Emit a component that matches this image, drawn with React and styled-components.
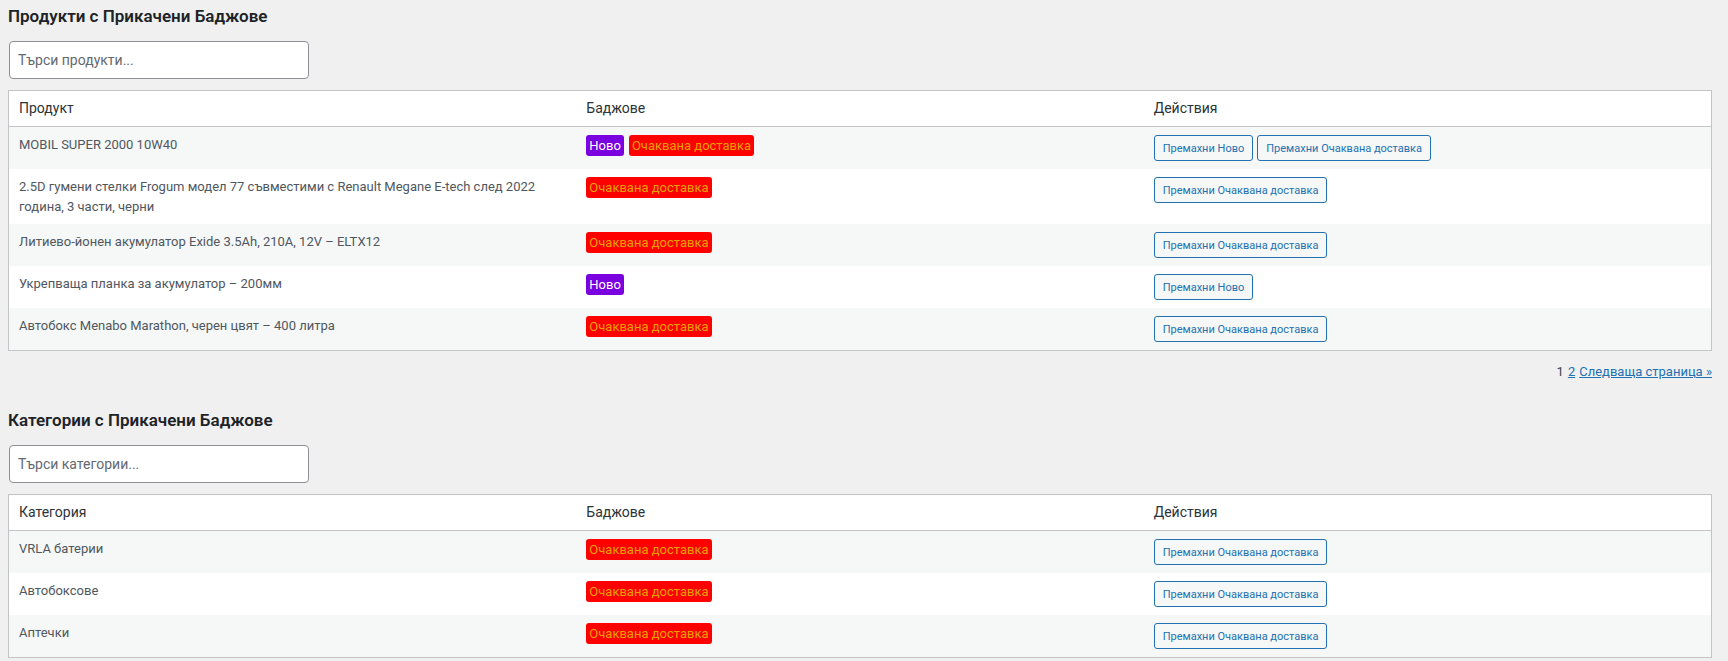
import React from "react";
import styled, { createGlobalStyle } from "styled-components";

const GlobalStyle = createGlobalStyle`
  html, body {
    margin: 0;
    padding: 0;
    background: #f0f0f1;
    font-family: Roboto, "Noto Sans", sans-serif;
    color: #3c434a;
    font-size: 13px;
  }
`;

const products = [
  { name: "MOBIL SUPER 2000 10W40", badges: ["new", "delivery"] },
  {
    name: "2.5D гумени стелки Frogum модел 77 съвместими с Renault Megane E-tech след 2022 година, 3 части, черни",
    badges: ["delivery"],
  },
  { name: "Литиево-йонен акумулатор Exide 3.5Ah, 210A, 12V – ELTX12", badges: ["delivery"] },
  { name: "Укрепваща планка за акумулатор – 200мм", badges: ["new"] },
  { name: "Автобокс Menabo Marathon, черен цвят – 400 литра", badges: ["delivery"] },
];

const categories = [
  { name: "VRLA батерии", badges: ["delivery"] },
  { name: "Автобоксове", badges: ["delivery"] },
  { name: "Аптечки", badges: ["delivery"] },
];

const badgeLabels = {
  new: "Ново",
  delivery: "Очаквана доставка",
};

function BadgeTable({ firstCol, rows }) {
  return (
    <Table>
      <thead>
        <tr>
          <Th>{firstCol}</Th>
          <Th>Баджове</Th>
          <Th>Действия</Th>
        </tr>
      </thead>
      <tbody>
        {rows.map((row, i) => (
          <Row key={i} $striped={i % 2 === 0}>
            <Td>{row.name}</Td>
            <Td>
              <Badges>
                {row.badges.map((b) => (
                  <Badge key={b} $kind={b}>
                    {badgeLabels[b]}
                  </Badge>
                ))}
              </Badges>
            </Td>
            <Td>
              <Actions>
                {row.badges.map((b) => (
                  <SmallButton key={b}>Премахни {badgeLabels[b]}</SmallButton>
                ))}
              </Actions>
            </Td>
          </Row>
        ))}
      </tbody>
    </Table>
  );
}

export default function App() {
  return (
    <>
      <GlobalStyle />
      <Wrap>
        <Section>
          <Title>Продукти с Прикачени Баджове</Title>
          <Search placeholder="Търси продукти..." />
          <BadgeTable firstCol="Продукт" rows={products} />
          <Pagination>
            <span>1</span>
            <PageLink href="#">2</PageLink>
            <PageLink href="#">Следваща страница »</PageLink>
          </Pagination>
        </Section>
        <Section>
          <Title>Категории с Прикачени Баджове</Title>
          <Search placeholder="Търси категории..." />
          <BadgeTable firstCol="Категория" rows={categories} />
        </Section>
      </Wrap>
    </>
  );
}

const Wrap = styled.div`
  padding: 5px 16px 0 8px;
  display: flex;
  flex-direction: column;
  gap: 28px;
`;

const Section = styled.div`
  display: flex;
  flex-direction: column;
`;

const Title = styled.h2`
  margin: 0 0 13px 0;
  font-size: 17px;
  line-height: 23px;
  font-weight: 600;
  color: #1d2327;
`;

const Search = styled.input`
  box-sizing: border-box;
  width: 300px;
  height: 38px;
  margin: 0 0 11px 1px;
  padding: 0 8px;
  border: 1px solid #8c8f94;
  border-radius: 4px;
  background: #fff;
  font-family: inherit;
  font-size: 14px;
  color: #2c3338;
  outline: none;

  &::placeholder {
    color: #646970;
  }
`;

const Table = styled.table`
  width: 100%;
  table-layout: fixed;
  border-spacing: 0;
  border: 1px solid #c3c4c7;
  background: #fff;
`;

const Th = styled.th`
  text-align: left;
  font-weight: 400;
  font-size: 14px;
  line-height: 19px;
  color: #2c3338;
  padding: 8px 10px;
  border-bottom: 1px solid #c3c4c7;
`;

const Row = styled.tr`
  background: ${(p) => (p.$striped ? "#f6f7f7" : "#fff")};
`;

const Td = styled.td`
  vertical-align: top;
  padding: 8px 10px;
  font-size: 13px;
  line-height: 19.5px;
  color: #50575e;
`;

const Badges = styled.div`
  display: flex;
  gap: 5px;
`;

const Badge = styled.span`
  display: inline-block;
  padding: 0 3px;
  height: 21px;
  line-height: 21px;
  border-radius: 3px;
  font-size: 13px;
  background: ${(p) => (p.$kind === "new" ? "#7a00df" : "#ff0000")};
  color: ${(p) => (p.$kind === "new" ? "#ffffff" : "#e8a200")};
`;

const Actions = styled.div`
  display: flex;
  gap: 4px;
`;

const SmallButton = styled.button`
  height: 26px;
  padding: 0 8px;
  border: 1px solid #2271b1;
  border-radius: 3px;
  background: #f6f7f7;
  color: #2271b1;
  font-family: inherit;
  font-size: 11px;
  cursor: pointer;
`;

const Pagination = styled.div`
  display: flex;
  justify-content: flex-end;
  gap: 4px;
  margin-top: 12px;
  font-size: 13px;
  line-height: 18px;
  color: #3c434a;
`;

const PageLink = styled.a`
  color: #2271b1;
  text-decoration: underline;
`;
